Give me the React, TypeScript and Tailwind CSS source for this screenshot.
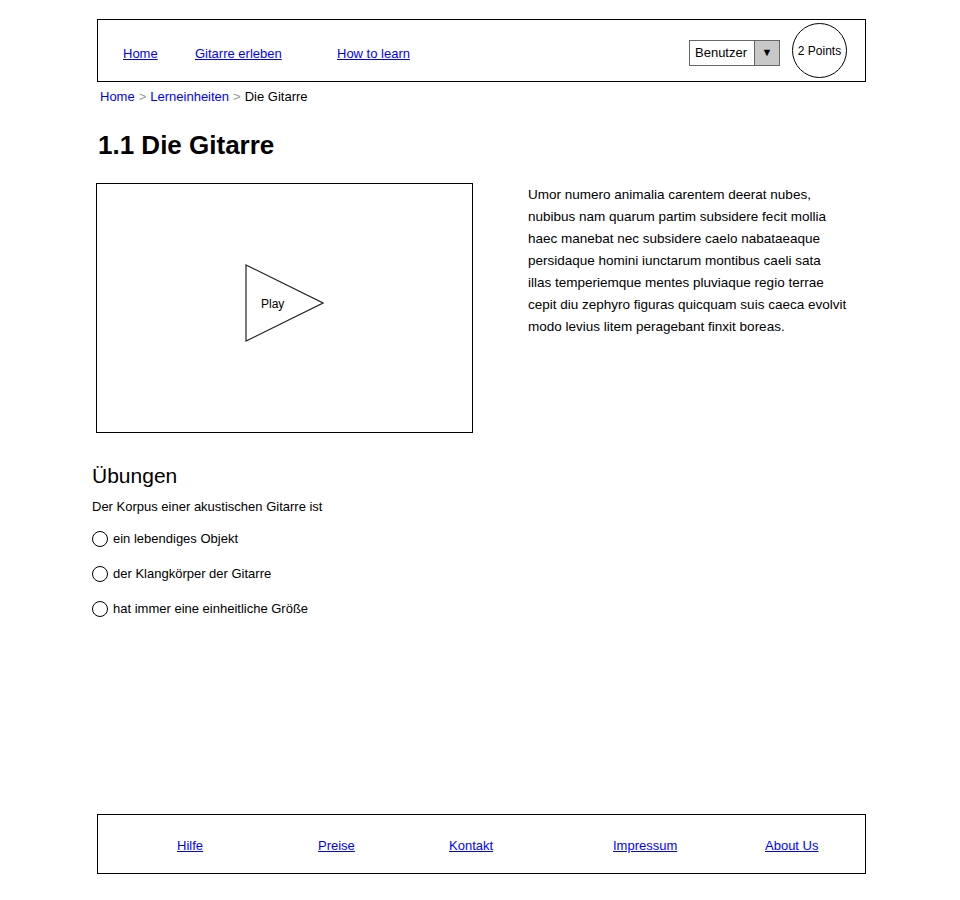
const navItems = [
  { label: "Home", width: "w-[72px]" },
  { label: "Gitarre erleben", width: "w-[142px]" },
  { label: "How to learn", width: "w-auto" },
];

const footerItems = [
  { label: "Hilfe", width: "w-[141px]" },
  { label: "Preise", width: "w-[131px]" },
  { label: "Kontakt", width: "w-[164px]" },
  { label: "Impressum", width: "w-[152px]" },
  { label: "About Us", width: "w-auto" },
];

const answers = [
  "ein lebendiges Objekt",
  "der Klangkörper der Gitarre",
  "hat immer eine einheitliche Größe",
];

const loremLines = [
  "Umor numero animalia carentem deerat nubes,",
  "nubibus nam quarum partim subsidere fecit mollia",
  "haec manebat nec subsidere caelo nabataeaque",
  "persidaque homini iunctarum montibus caeli sata",
  "illas temperiemque mentes pluviaque regio terrae",
  "cepit diu zephyro figuras quicquam suis caeca evolvit",
  "modo levius litem peragebant finxit boreas.",
];

export default function App() {
  return (
    <div className="min-h-[900px] bg-white font-['Liberation_Sans',Arial,sans-serif] text-black">
      <div className="ml-[97px] w-[769px] pt-[19px]">
        {/* header */}
        <header className="flex h-[63px] items-center border border-black pl-[25px] pr-[18px]">
          <nav className="flex flex-1 items-center pt-[6px] text-[13px]">
            {navItems.map((item) => (
              <a key={item.label} href="#" className={`${item.width} text-[#0000ff] underline`}>
                {item.label}
              </a>
            ))}
          </nav>
          <div className="mt-[4px] flex h-[26px] w-[91px] border border-[#666] text-[13px]">
            <span className="flex flex-1 items-center pl-[5px]">Benutzer</span>
            <span className="flex w-[25px] items-center justify-center border-l border-[#666] bg-[#c8c8c8] text-[11px]">
              ▼
            </span>
          </div>
          <div className="ml-[12px] flex h-[55px] w-[55px] items-center justify-center rounded-full border border-black text-[12px] whitespace-nowrap">
            2 Points
          </div>
        </header>

        {/* breadcrumb */}
        <div className="mt-[5px] ml-[3px] flex items-center gap-[4px] text-[13px]">
          <a href="#" className="text-[#0000ff]">Home</a>
          <span className="text-[#999]">&gt;</span>
          <a href="#" className="text-[#0000ff]">Lerneinheiten</a>
          <span className="text-[#999]">&gt;</span>
          <span>Die Gitarre</span>
        </div>

        <h1 className="mt-[23px] ml-[1px] text-[26px] leading-[30px] font-bold">1.1 Die Gitarre</h1>

        <div className="mt-[23px] flex">
          <div className="-ml-[1px] flex h-[250px] w-[377px] items-start border border-black pt-[80px] pl-[148px]">
            <div className="relative h-[78px] w-[79px]">
              <svg width="79" height="78" viewBox="0 0 79 78" className="absolute inset-0">
                <polygon points="1,1 78,39 1,77" fill="none" stroke="#222" strokeWidth="1.2" />
              </svg>
              <span className="absolute top-[31px] left-[16px] text-[12px]">Play</span>
            </div>
          </div>
          <div className="ml-[55px] pt-[1px] text-[13.5px] leading-[22px] whitespace-nowrap">
            {loremLines.map((line) => (
              <p key={line}>{line}</p>
            ))}
          </div>
        </div>

        {/* exercises */}
        <section className="-ml-[5px] mt-[30px]">
          <h2 className="text-[21px] leading-[26px]">Übungen</h2>
          <p className="mt-[8px] text-[13px]">Der Korpus einer akustischen Gitarre ist</p>
          <div className="mt-[13px] flex flex-col gap-[15px]">
            {answers.map((answer) => (
              <label key={answer} className="flex h-[20px] items-center gap-[5px] text-[13px]">
                <span className="h-[16px] w-[16px] rounded-full border border-black" />
                {answer}
              </label>
            ))}
          </div>
        </section>

        {/* footer */}
        <footer className="mt-[195px] flex h-[60px] items-center border border-black pt-[4px] pl-[79px] text-[13px]">
          {footerItems.map((item) => (
            <a key={item.label} href="#" className={`${item.width} text-[#0000ff] underline`}>
              {item.label}
            </a>
          ))}
        </footer>
      </div>
    </div>
  );
}
